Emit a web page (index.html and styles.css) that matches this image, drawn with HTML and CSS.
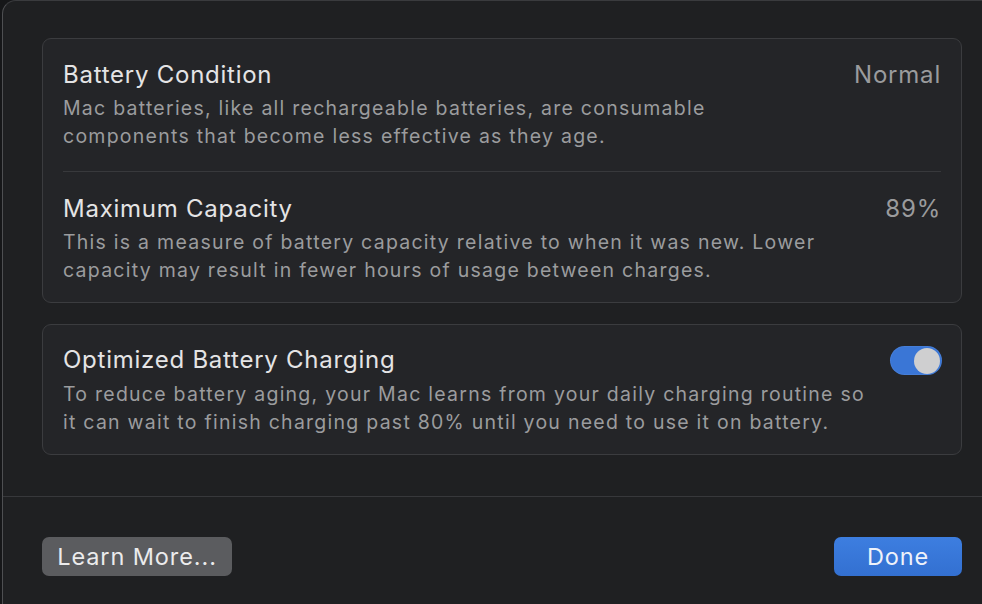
FILE: index.html
```html
<!DOCTYPE html>
<html>
<head>
<meta charset="utf-8">
<link rel="stylesheet" href="styles.css">
</head>
<body>
<div class="desk">
  <div class="sheet">
    <div class="content">
      <div class="card">
        <div class="row row-first">
          <div class="text">
            <div class="title">Battery Condition</div>
            <div class="desc">Mac batteries, like all rechargeable batteries, are consumable<br>components that become less effective as they age.</div>
          </div>
          <div class="value">Normal</div>
        </div>
        <div class="sep"></div>
        <div class="row row-second">
          <div class="text">
            <div class="title">Maximum Capacity</div>
            <div class="desc">This is a measure of battery capacity relative to when it was new. Lower<br>capacity may result in fewer hours of usage between charges.</div>
          </div>
          <div class="value">89%</div>
        </div>
      </div>
      <div class="card card2">
        <div class="row row2">
          <div class="text">
            <div class="title">Optimized Battery Charging</div>
            <div class="desc">To reduce battery aging, your Mac learns from your daily charging routine so<br>it can wait to finish charging past 80% until you need to use it on battery.</div>
          </div>
          <div class="toggle"><div class="knob"></div></div>
        </div>
      </div>
    </div>
    <div class="divider"></div>
    <div class="footer">
      <button class="btn btn-grey">Learn More...</button>
      <button class="btn btn-blue">Done</button>
    </div>
  </div>
</div>
</body>
</html>
```
FILE: styles.css
```css
* { box-sizing: border-box; }
html, body { margin: 0; padding: 0; }
body {
  width: 982px;
  height: 604px;
  overflow: hidden;
  background: #161719;
  font-family: Inter, "Noto Sans", "Liberation Sans", sans-serif;
}
.desk {
  height: 604px;
  padding-left: 2px;
}
.sheet {
  height: 604px;
  background: #1f2022;
  border-left: 1px solid #4e4f52;
  border-top: 1px solid #3a3b3e;
  border-top-left-radius: 14px;
  display: flex;
  flex-direction: column;
}
.content {
  padding: 37px 20px 0 39px;
  display: flex;
  flex-direction: column;
  gap: 21px;
}
.card {
  background: #242528;
  border: 1px solid #3b3c3f;
  border-radius: 9px;
  padding: 0 20px;
}
.row {
  display: flex;
  justify-content: space-between;
  align-items: flex-start;
}
.row-first { padding: 22px 0 21px; }
.row-second { padding: 23px 0 18px; }
.row2 { padding: 21px 0 18px; }
.text { display: flex; flex-direction: column; }
.title {
  color: #e4e4e5;
  font-size: 24px;
  letter-spacing: 0.75px;
  line-height: 28px;
}
.desc {
  color: #9b9c9e;
  font-size: 19.5px;
  letter-spacing: 1.25px;
  line-height: 28px;
  margin-top: 5px;
  white-space: nowrap;
}
.row2 .desc { margin-top: 6px; }
.value {
  color: #9a9b9d;
  font-size: 24px;
  letter-spacing: 0.8px;
  line-height: 28px;
}
.sep {
  height: 1px;
  background: #38393c;
}
.toggle {
  flex: none;
  width: 52px;
  height: 29px;
  border-radius: 15px;
  background: #3a76d6;
  position: relative;
  margin-right: -1px;
  box-shadow: inset 0 0 0 1px rgba(255,255,255,0.06);
}
.knob {
  position: absolute;
  right: 2px;
  top: 1.5px;
  width: 26px;
  height: 26px;
  border-radius: 50%;
  background: #cfcfd0;
}
.divider {
  margin-top: 41px;
  height: 1px;
  background: #37383b;
}
.footer {
  display: flex;
  justify-content: space-between;
  padding: 40px 20px 0 39px;
}
.btn {
  font-family: Inter, "Noto Sans", "Liberation Sans", sans-serif;
  font-size: 23.5px;
  letter-spacing: 0.9px;
  border: none;
  border-radius: 7px;
  height: 39px;
  color: #ebebec;
  padding: 0;
}
.btn-grey {
  width: 190px;
  background: #5b5c5f;
}
.btn-blue {
  width: 128px;
  background: linear-gradient(#3d7ee0, #3370d1);
  color: #eef2fa;
}
```
